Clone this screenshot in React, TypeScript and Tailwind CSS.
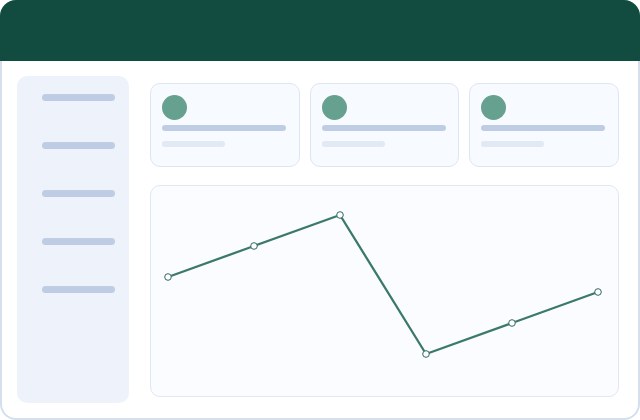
import React from "react";

const points: [number, number][] = [
  [18, 92],
  [104, 61],
  [190, 30],
  [276, 169],
  [362, 138],
  [448, 107],
];

function StatCard() {
  return (
    <div className="flex h-[84px] flex-col rounded-[10px] border border-[#dce6f4] bg-[#f7faff] px-[11px] pt-[11px]">
      <div className="h-[25px] w-[25px] rounded-full bg-[#66a08f]" />
      <div className="mt-[5px] h-[6px] w-[124px] rounded-full bg-[#bfcde4]" />
      <div className="mt-[10px] h-[6px] w-[63px] rounded-full bg-[#e1e9f4]" />
    </div>
  );
}

function LineChart() {
  const d = points.map(([x, y], i) => `${i === 0 ? "M" : "L"}${x} ${y}`).join(" ");
  return (
    <svg width="470" height="212" viewBox="0 0 470 212" className="block">
      <path d={d} fill="none" stroke="#3c7a68" strokeWidth="2.3" strokeLinejoin="round" />
      {points.map(([x, y], i) => (
        <circle key={i} cx={x} cy={y} r="3.3" fill="#ffffff" stroke="#2f6a59" strokeWidth="1" />
      ))}
    </svg>
  );
}

export default function App() {
  return (
    <div className="flex h-[420px] w-[640px] flex-col overflow-hidden rounded-[16px] bg-[#d5dfed]">
      <div className="h-[61px] shrink-0 bg-[#124b3f]" />
      <div className="mx-[2px] mb-[2px] flex flex-1 rounded-b-[14px] bg-white pb-[15px] pl-[15px] pt-[15px]">
        <aside className="flex w-[112px] flex-col gap-[41px] rounded-[10px] bg-[#eef3fb] pl-[25px] pr-[14px] pt-[18px]">
          {[0, 1, 2, 3, 4].map((i) => (
            <div key={i} className="h-[7px] w-[73px] rounded-full bg-[#bfcde4]" />
          ))}
        </aside>
        <main className="ml-[21px] flex w-[469px] flex-col pb-[6px] pt-[7px]">
          <div className="grid grid-cols-3 gap-[10px]">
            <StatCard />
            <StatCard />
            <StatCard />
          </div>
          <div className="mt-[18px] flex-1 overflow-hidden rounded-[10px] border border-[#dfe7f2] bg-[#fafcff]">
            <div className="-m-px">
              <LineChart />
            </div>
          </div>
        </main>
      </div>
    </div>
  );
}
